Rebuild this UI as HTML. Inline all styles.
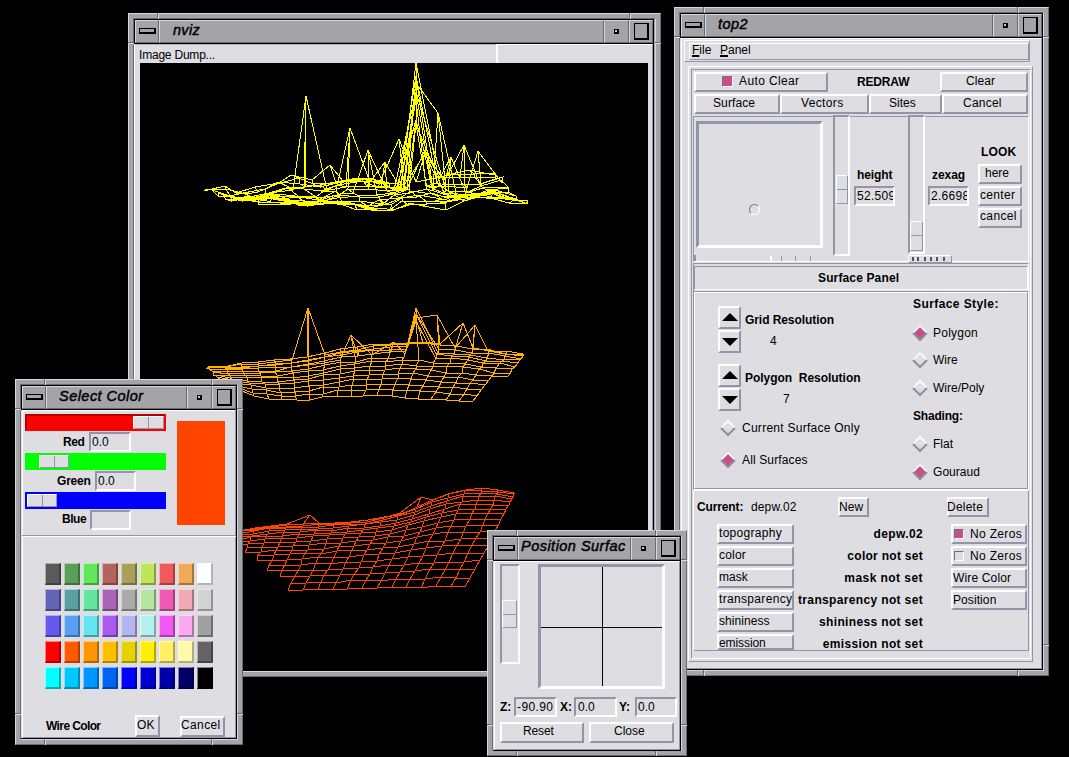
<!DOCTYPE html>
<html><head><meta charset="utf-8"><style>
html,body{margin:0;padding:0;background:#000;width:1069px;height:757px;overflow:hidden;position:relative}
div{position:absolute;box-sizing:border-box}
.t{white-space:nowrap;font-family:"Liberation Sans",sans-serif;line-height:normal;height:auto;color:#000}
svg{position:absolute;left:0;top:0}
</style></head><body>
<div style="left:128px;top:13px;width:533px;height:664px;background:#a4a4a8"></div>
<div style="left:128px;top:13px;width:533px;height:664px;border-style:solid;border-width:1px;border-color:#d6d6e2 #6a6a70 #6a6a70 #d6d6e2;"></div>
<div style="left:133px;top:18px;width:523px;height:654px;border-style:solid;border-width:1px;border-color:#6a6a70 #d6d6e2 #d6d6e2 #6a6a70;"></div>
<div style="left:158px;top:13px;width:1px;height:6px;background:#d6d6e2"></div>
<div style="left:630px;top:13px;width:1px;height:6px;background:#d6d6e2"></div>
<div style="left:158px;top:671px;width:1px;height:6px;background:#d6d6e2"></div>
<div style="left:630px;top:671px;width:1px;height:6px;background:#d6d6e2"></div>
<div style="left:128px;top:43px;width:6px;height:1px;background:#d6d6e2"></div>
<div style="left:655px;top:43px;width:6px;height:1px;background:#d6d6e2"></div>
<div style="left:128px;top:646px;width:6px;height:1px;background:#d6d6e2"></div>
<div style="left:655px;top:646px;width:6px;height:1px;background:#d6d6e2"></div>
<div style="left:157px;top:13px;width:1px;height:6px;background:#6a6a70"></div>
<div style="left:629px;top:13px;width:1px;height:6px;background:#6a6a70"></div>
<div style="left:157px;top:671px;width:1px;height:6px;background:#6a6a70"></div>
<div style="left:629px;top:671px;width:1px;height:6px;background:#6a6a70"></div>
<div style="left:128px;top:42px;width:6px;height:1px;background:#6a6a70"></div>
<div style="left:655px;top:42px;width:6px;height:1px;background:#6a6a70"></div>
<div style="left:128px;top:645px;width:6px;height:1px;background:#6a6a70"></div>
<div style="left:655px;top:645px;width:6px;height:1px;background:#6a6a70"></div>
<div style="left:134px;top:19px;width:520px;height:25px;border:1px solid #000;background:#a4a4a8"></div>
<div style="left:135px;top:20px;width:24px;height:23px;border-style:solid;border-width:1px;border-color:#d6d6e2 #6a6a70 #6a6a70 #d6d6e2;"></div>
<div style="left:159px;top:20px;width:445px;height:23px;border-style:solid;border-width:1px;border-color:#d6d6e2 #6a6a70 #6a6a70 #d6d6e2;"></div>
<div style="left:604px;top:20px;width:25px;height:23px;border-style:solid;border-width:1px;border-color:#d6d6e2 #6a6a70 #6a6a70 #d6d6e2;"></div>
<div style="left:629px;top:20px;width:24px;height:23px;border-style:solid;border-width:1px;border-color:#d6d6e2 #6a6a70 #6a6a70 #d6d6e2;"></div>
<div style="left:139px;top:28px;width:17px;height:6px;border:solid #000;border-width:1px 2px 2px 1px"></div>
<div style="left:614px;top:29px;width:5px;height:5px;border:solid #000;border-width:1px 2px 2px 1px;background:#c8c8d0"></div>
<div style="left:634px;top:23px;width:15px;height:17px;border:solid #000;border-width:1px 2px 2px 1px"></div>
<div class="t" style="left:173px;top:22px;font-size:14.5px;font-weight:normal;font-style:italic;color:#000;letter-spacing:0.301px;-webkit-text-stroke:0.45px #000">nviz</div>
<div style="left:134px;top:44px;width:519px;height:627px;background:#dedee2"></div>
<div style="left:134px;top:44px;width:519px;height:627px;border-style:solid;border-width:1px;border-color:#ffffff #9494a8 #9494a8 #ffffff;"></div>
<div style="left:653px;top:44px;width:1px;height:627px;background:#000"></div>
<div style="left:135px;top:44px;width:361px;height:1px;background:#b4b4bc"></div>
<div style="left:496px;top:44px;width:2px;height:19px;background:#ffffff"></div>
<div class="t" style="left:139px;top:48px;font-size:12px;font-weight:normal;font-style:normal;color:#000;letter-spacing:-0.208px;">Image Dump...</div>
<div style="left:140px;top:63px;width:508px;height:608px;background:#000"></div>
<svg width="1069" height="757" style="left:0;top:0"><defs><clipPath id="cv"><rect x="140" y="63" width="508" height="609"/></clipPath></defs><g clip-path="url(#cv)" fill="none" stroke-width="1" shape-rendering="crispEdges"><path d="M258,204 282,204 291,204 309,203 330,203 343,205 357,210 379,208 394,210 410,203 423,206 446,210 464,201 478,197 494,199 509,203 526,203 M259,202 280,203 293,203 306,202 327,201 338,204 355,205 375,210 393,210 409,205 427,204 445,203 457,198 480,197 495,198 514,200 528,201 M258,198 270,202 288,203 308,205 323,203 343,201 352,204 374,211 390,210 402,201 426,201 435,201 452,201 476,193 491,197 511,197 527,204 M256,200 273,197 291,202 301,206 323,204 336,203 354,204 365,206 392,204 402,198 418,195 442,199 452,201 471,198 493,193 509,199 517,200 M251,200 271,198 287,200 299,204 318,201 337,201 351,203 370,208 387,204 403,197 417,197 432,193 447,198 474,197 490,192 498,196 516,200 M251,199 263,197 278,200 298,200 318,203 327,203 349,203 368,206 379,200 400,198 411,191 432,194 446,197 470,195 486,195 496,193 521,201 M243,201 261,197 277,195 290,200 308,206 327,203 342,202 359,201 383,204 394,195 410,193 427,189 450,196 465,198 479,195 496,192 517,200 M244,199 254,199 270,197 293,203 311,202 327,200 339,195 359,197 379,197 398,193 409,189 416,124 444,193 458,194 475,195 495,190 516,196 M233,198 254,198 270,194 284,201 308,205 318,202 337,198 359,196 377,195 393,193 404,189 416,92 446,190 461,197 481,193 495,192 508,192 M231,197 251,199 271,197 285,200 306,203 317,201 340,194 353,193 368,150 387,191 403,190 416,83 438,113 457,197 477,195 488,190 508,188 M231,201 249,198 269,195 280,199 298,197 319,198 339,195 348,189 368,189 387,191 407,188 416,77 433,189 452,196 474,194 490,192 504,187 M225,199 240,200 262,196 276,194 295,196 318,200 336,191 350,128 370,182 385,162 401,189 416,63 440,185 448,191 469,192 483,188 508,187 M226,199 246,200 257,202 277,196 298,196 316,197 324,191 346,187 367,186 381,186 398,189 416,76 437,183 451,157 466,193 481,186 501,180 M222,194 238,200 253,201 273,193 288,188 304,189 321,191 338,185 363,181 377,187 400,187 416,100 426,186 444,186 467,188 478,151 502,183 M218,193 234,198 254,196 269,193 293,190 306,96 327,190 344,182 361,179 381,183 394,190 416,92 432,188 445,184 464,184 481,184 503,177 M218,196 235,197 254,198 266,194 289,187 305,187 320,185 341,181 358,178 374,179 396,190 416,120 425,155 445,180 464,145 480,184 495,179 M212,190 230,196 243,193 265,189 278,182 300,184 320,187 337,183 352,180 372,179 390,187 407,189 425,150 441,177 460,177 475,177 495,177 M206,189 226,189 246,194 258,192 277,184 299,178 313,184 336,183 352,181 371,179 389,183 404,185 425,154 436,177 459,174 474,174 495,173 M204,191 225,186 236,193 255,187 279,183 291,175 312,180 330,165 343,181 370,181 379,184 399,139 416,182 437,178 451,174 469,170 494,175 M258,204 259,202 258,198 256,200 251,200 251,199 243,201 244,199 233,198 231,197 231,201 225,199 226,199 222,194 218,193 218,196 212,190 206,189 204,191 M282,204 280,203 270,202 273,197 271,198 263,197 261,197 254,199 254,198 251,199 249,198 240,200 246,200 238,200 234,198 235,197 230,196 226,189 225,186 M291,204 293,203 288,203 291,202 287,200 278,200 277,195 270,197 270,194 271,197 269,195 262,196 257,202 253,201 254,196 254,198 243,193 246,194 236,193 M309,203 306,202 308,205 301,206 299,204 298,200 290,200 293,203 284,201 285,200 280,199 276,194 277,196 273,193 269,193 266,194 265,189 258,192 255,187 M330,203 327,201 323,203 323,204 318,201 318,203 308,206 311,202 308,205 306,203 298,197 295,196 298,196 288,188 293,190 289,187 278,182 277,184 279,183 M343,205 338,204 343,201 336,203 337,201 327,203 327,203 327,200 318,202 317,201 319,198 318,200 316,197 304,189 306,96 305,187 300,184 299,178 291,175 M357,210 355,205 352,204 354,204 351,203 349,203 342,202 339,195 337,198 340,194 339,195 336,191 324,191 321,191 327,190 320,185 320,187 313,184 312,180 M379,208 375,210 374,211 365,206 370,208 368,206 359,201 359,197 359,196 353,193 348,189 350,128 346,187 338,185 344,182 341,181 337,183 336,183 330,165 M394,210 393,210 390,210 392,204 387,204 379,200 383,204 379,197 377,195 368,150 368,189 370,182 367,186 363,181 361,179 358,178 352,180 352,181 343,181 M410,203 409,205 402,201 402,198 403,197 400,198 394,195 398,193 393,193 387,191 387,191 385,162 381,186 377,187 381,183 374,179 372,179 371,179 370,181 M423,206 427,204 426,201 418,195 417,197 411,191 410,193 409,189 404,189 403,190 407,188 401,189 398,189 400,187 394,190 396,190 390,187 389,183 379,184 M446,210 445,203 435,201 442,199 432,193 432,194 427,189 416,124 416,92 416,83 416,77 416,63 416,76 416,100 416,92 416,120 407,189 404,185 399,139 M464,201 457,198 452,201 452,201 447,198 446,197 450,196 444,193 446,190 438,113 433,189 440,185 437,183 426,186 432,188 425,155 425,150 425,154 416,182 M478,197 480,197 476,193 471,198 474,197 470,195 465,198 458,194 461,197 457,197 452,196 448,191 451,157 444,186 445,184 445,180 441,177 436,177 437,178 M494,199 495,198 491,197 493,193 490,192 486,195 479,195 475,195 481,193 477,195 474,194 469,192 466,193 467,188 464,184 464,145 460,177 459,174 451,174 M509,203 514,200 511,197 509,199 498,196 496,193 496,192 495,190 495,192 488,190 490,192 483,188 481,186 478,151 481,184 480,184 475,177 474,174 469,170 M526,203 528,201 527,204 517,200 516,200 521,201 517,200 516,196 508,192 508,188 504,187 508,187 501,180 502,183 503,177 495,179 495,177 495,173 494,175" stroke="#ffff00" /><path d="M228,387 242,391 254,396 269,399 282,399 297,400 310,400 322,397 337,396 351,396 363,396 377,395 392,396 405,398 418,399 431,399 446,400 459,401 472,402 M225,385 239,388 253,393 267,394 281,396 295,396 309,394 323,394 338,390 351,391 366,390 379,389 393,390 407,390 420,391 436,392 450,394 464,394 477,396 M223,385 238,386 252,389 266,390 281,393 295,392 309,391 323,387 339,387 352,385 366,385 381,384 395,384 409,385 423,386 439,387 453,387 467,389 481,390 M221,382 236,384 251,385 266,388 279,389 294,388 309,386 324,385 339,382 354,379 367,380 382,379 398,378 411,379 426,380 441,382 456,383 470,383 485,385 M220,379 233,382 249,383 265,384 279,384 294,383 308,381 323,380 339,378 353,376 369,375 383,374 398,374 413,373 428,376 444,377 458,377 473,380 489,380 M217,377 233,380 247,381 262,382 278,382 294,380 308,379 323,375 340,374 355,371 369,370 385,370 400,368 416,369 431,370 446,373 462,373 476,375 492,376 507,377 M216,375 230,378 247,377 261,378 277,377 293,378 308,376 324,373 340,369 354,368 370,366 385,366 402,364 416,366 433,367 447,366 463,367 479,369 494,373 510,374 M213,375 230,375 245,375 261,376 278,376 293,373 308,371 323,370 340,366 354,364 372,361 386,362 402,360 419,360 433,363 450,363 465,364 482,367 496,368 512,369 M213,372 228,374 244,373 260,373 275,372 292,371 308,369 325,365 341,362 356,362 371,358 388,359 404,357 416,321 436,359 451,358 468,360 483,363 500,363 515,367 M212,371 227,372 243,371 259,372 276,371 291,367 309,365 324,363 340,360 351,335 372,355 394,342 405,354 416,314 436,354 452,356 469,357 486,361 502,361 518,363 M210,370 227,369 242,369 258,368 275,367 291,367 309,364 324,361 341,357 358,356 372,354 390,352 406,351 416,308 438,353 454,354 470,355 487,358 504,360 520,359 M210,370 226,369 241,368 259,366 275,365 291,363 308,361 325,357 341,355 358,352 373,350 389,350 406,349 416,314 439,349 455,350 472,353 489,353 505,356 521,359 M209,368 225,367 242,367 259,366 275,364 291,363 308,360 324,357 340,353 358,351 374,349 390,347 408,346 416,318 437,315 455,348 475,325 488,351 505,354 523,356 M207,368 226,367 241,364 258,364 275,362 292,360 308,308 325,355 341,352 357,350 373,346 391,345 408,344 423,343 440,345 456,346 473,349 490,350 506,354 523,355 M209,366 224,367 242,363 258,362 274,360 290,359 307,357 325,353 340,349 357,347 374,344 390,344 408,343 423,342 440,344 463,323 473,348 490,351 506,351 523,354 M228,387 225,385 223,385 221,382 220,379 217,377 216,375 213,375 213,372 212,371 210,370 210,370 209,368 207,368 209,366 M242,391 239,388 238,386 236,384 233,382 233,380 230,378 230,375 228,374 227,372 227,369 226,369 225,367 226,367 224,367 M254,396 253,393 252,389 251,385 249,383 247,381 247,377 245,375 244,373 243,371 242,369 241,368 242,367 241,364 242,363 M269,399 267,394 266,390 266,388 265,384 262,382 261,378 261,376 260,373 259,372 258,368 259,366 259,366 258,364 258,362 M282,399 281,396 281,393 279,389 279,384 278,382 277,377 278,376 275,372 276,371 275,367 275,365 275,364 275,362 274,360 M297,400 295,396 295,392 294,388 294,383 294,380 293,378 293,373 292,371 291,367 291,367 291,363 291,363 292,360 290,359 M310,400 309,394 309,391 309,386 308,381 308,379 308,376 308,371 308,369 309,365 309,364 308,361 308,360 308,308 307,357 M322,397 323,394 323,387 324,385 323,380 323,375 324,373 323,370 325,365 324,363 324,361 325,357 324,357 325,355 325,353 M337,396 338,390 339,387 339,382 339,378 340,374 340,369 340,366 341,362 340,360 341,357 341,355 340,353 341,352 340,349 M351,396 351,391 352,385 354,379 353,376 355,371 354,368 354,364 356,362 351,335 358,356 358,352 358,351 357,350 357,347 M363,396 366,390 366,385 367,380 369,375 369,370 370,366 372,361 371,358 372,355 372,354 373,350 374,349 373,346 374,344 M377,395 379,389 381,384 382,379 383,374 385,370 385,366 386,362 388,359 394,342 390,352 389,350 390,347 391,345 390,344 M392,396 393,390 395,384 398,378 398,374 400,368 402,364 402,360 404,357 405,354 406,351 406,349 408,346 408,344 408,343 M405,398 407,390 409,385 411,379 413,373 416,369 416,366 419,360 416,321 416,314 416,308 416,314 416,318 423,343 423,342 M418,399 420,391 423,386 426,380 428,376 431,370 433,367 433,363 436,359 436,354 438,353 439,349 437,315 440,345 440,344 M431,399 436,392 439,387 441,382 444,377 446,373 447,366 450,363 451,358 452,356 454,354 455,350 455,348 456,346 463,323 M446,400 450,394 453,387 456,383 458,377 462,373 463,367 465,364 468,360 469,357 470,355 472,353 475,325 473,349 473,348 M459,401 464,394 467,389 470,383 473,380 476,375 479,369 482,367 483,363 486,361 487,358 489,353 488,351 490,350 490,351 M472,402 477,396 481,390 485,385 489,380 492,376 494,373 496,368 500,363 502,361 504,360 505,356 505,354 506,354 506,351 M507,377 510,374 512,369 515,367 518,363 520,359 521,359 523,356 523,355 523,354" stroke="#ffb000" /><path d="M288,590 303,590 318,589 333,589 347,589 362,588 377,588 392,587 406,587 421,588 436,586 451,586 465,587 M291,583 306,583 321,582 336,583 351,580 366,580 381,581 396,579 410,579 425,579 441,577 456,578 470,578 M280,576 295,576 310,576 324,575 340,575 354,574 370,574 385,573 400,572 415,571 430,569 445,570 460,569 475,569 M267,571 282,570 298,571 313,570 328,570 343,569 359,568 373,567 389,565 404,565 419,563 434,563 449,562 464,562 480,560 M269,565 285,565 301,565 316,563 331,564 346,562 361,562 377,561 392,559 408,557 423,556 437,555 453,553 468,553 484,553 M257,560 272,561 287,560 302,559 318,557 334,557 349,557 364,555 379,554 395,553 411,550 426,548 442,546 457,545 472,545 488,546 M258,555 274,555 290,554 305,553 321,554 337,551 352,550 367,550 383,548 398,547 414,544 429,541 445,541 461,539 476,538 492,538 M245,553 261,552 276,550 292,550 308,550 324,549 339,546 354,546 370,544 386,543 401,541 417,537 433,534 448,532 463,533 480,532 495,531 M247,548 262,547 278,547 293,546 309,545 326,543 341,543 356,541 373,540 388,537 404,536 420,532 436,528 451,526 466,526 483,525 498,526 M232,546 248,544 264,543 280,542 296,542 311,541 327,539 343,538 359,537 375,536 390,534 406,530 422,527 438,523 454,520 470,519 485,519 501,519 M233,543 250,541 265,539 282,538 297,538 313,536 329,535 345,534 361,533 376,532 392,530 408,525 424,521 441,517 456,514 472,513 488,513 504,514 M235,541 251,537 266,536 282,536 299,534 314,534 331,533 347,532 363,530 378,528 394,526 411,522 426,517 442,513 458,510 475,509 490,510 506,509 M236,536 252,536 268,534 284,532 300,532 316,530 332,531 348,528 364,528 380,526 396,523 412,519 429,514 445,509 460,504 476,504 493,505 509,505 M236,534 253,534 269,531 285,530 301,529 318,529 333,528 349,526 365,524 381,522 397,520 414,515 430,509 446,504 462,502 478,500 494,500 510,502 M221,535 238,534 254,531 269,528 286,528 302,527 318,527 334,525 350,524 366,524 383,520 398,516 415,512 431,506 447,501 463,496 479,496 495,496 512,499 M222,533 238,531 254,530 270,528 286,527 303,526 319,524 335,524 351,523 367,522 383,518 400,514 416,509 432,502 448,498 464,494 481,493 497,494 513,497 M223,532 238,531 255,529 271,527 287,525 303,524 320,523 335,523 351,522 368,520 384,517 401,515 417,507 433,500 448,494 465,490 481,491 497,492 514,494 M223,531 239,531 255,528 271,526 287,524 310,515 319,523 336,523 352,522 368,520 384,518 400,513 421,497 433,500 449,494 466,490 482,488 498,490 514,493 M221,535 222,533 223,532 223,531 M232,546 233,543 235,541 236,536 236,534 238,534 238,531 238,531 239,531 M245,553 247,548 248,544 250,541 251,537 252,536 253,534 254,531 254,530 255,529 255,528 M257,560 258,555 261,552 262,547 264,543 265,539 266,536 268,534 269,531 269,528 270,528 271,527 271,526 M267,571 269,565 272,561 274,555 276,550 278,547 280,542 282,538 282,536 284,532 285,530 286,528 286,527 287,525 287,524 M280,576 282,570 285,565 287,560 290,554 292,550 293,546 296,542 297,538 299,534 300,532 301,529 302,527 303,526 303,524 310,515 M288,590 291,583 295,576 298,571 301,565 302,559 305,553 308,550 309,545 311,541 313,536 314,534 316,530 318,529 318,527 319,524 320,523 319,523 M303,590 306,583 310,576 313,570 316,563 318,557 321,554 324,549 326,543 327,539 329,535 331,533 332,531 333,528 334,525 335,524 335,523 336,523 M318,589 321,582 324,575 328,570 331,564 334,557 337,551 339,546 341,543 343,538 345,534 347,532 348,528 349,526 350,524 351,523 351,522 352,522 M333,589 336,583 340,575 343,569 346,562 349,557 352,550 354,546 356,541 359,537 361,533 363,530 364,528 365,524 366,524 367,522 368,520 368,520 M347,589 351,580 354,574 359,568 361,562 364,555 367,550 370,544 373,540 375,536 376,532 378,528 380,526 381,522 383,520 383,518 384,517 384,518 M362,588 366,580 370,574 373,567 377,561 379,554 383,548 386,543 388,537 390,534 392,530 394,526 396,523 397,520 398,516 400,514 401,515 400,513 M377,588 381,581 385,573 389,565 392,559 395,553 398,547 401,541 404,536 406,530 408,525 411,522 412,519 414,515 415,512 416,509 417,507 421,497 M392,587 396,579 400,572 404,565 408,557 411,550 414,544 417,537 420,532 422,527 424,521 426,517 429,514 430,509 431,506 432,502 433,500 433,500 M406,587 410,579 415,571 419,563 423,556 426,548 429,541 433,534 436,528 438,523 441,517 442,513 445,509 446,504 447,501 448,498 448,494 449,494 M421,588 425,579 430,569 434,563 437,555 442,546 445,541 448,532 451,526 454,520 456,514 458,510 460,504 462,502 463,496 464,494 465,490 466,490 M436,586 441,577 445,570 449,562 453,553 457,545 461,539 463,533 466,526 470,519 472,513 475,509 476,504 478,500 479,496 481,493 481,491 482,488 M451,586 456,578 460,569 464,562 468,553 472,545 476,538 480,532 483,525 485,519 488,513 490,510 493,505 494,500 495,496 497,494 497,492 498,490 M465,587 470,578 475,569 480,560 484,553 488,546 492,538 495,531 498,526 501,519 504,514 506,509 509,505 510,502 512,499 513,497 514,494 514,493" stroke="#ff4400" /></g></svg>
<div style="left:674px;top:7px;width:375px;height:669px;background:#a4a4a8"></div>
<div style="left:674px;top:7px;width:375px;height:669px;border-style:solid;border-width:1px;border-color:#d6d6e2 #6a6a70 #6a6a70 #d6d6e2;"></div>
<div style="left:679px;top:12px;width:365px;height:659px;border-style:solid;border-width:1px;border-color:#6a6a70 #d6d6e2 #d6d6e2 #6a6a70;"></div>
<div style="left:704px;top:7px;width:1px;height:6px;background:#d6d6e2"></div>
<div style="left:1018px;top:7px;width:1px;height:6px;background:#d6d6e2"></div>
<div style="left:704px;top:670px;width:1px;height:6px;background:#d6d6e2"></div>
<div style="left:1018px;top:670px;width:1px;height:6px;background:#d6d6e2"></div>
<div style="left:674px;top:37px;width:6px;height:1px;background:#d6d6e2"></div>
<div style="left:1043px;top:37px;width:6px;height:1px;background:#d6d6e2"></div>
<div style="left:674px;top:645px;width:6px;height:1px;background:#d6d6e2"></div>
<div style="left:1043px;top:645px;width:6px;height:1px;background:#d6d6e2"></div>
<div style="left:703px;top:7px;width:1px;height:6px;background:#6a6a70"></div>
<div style="left:1017px;top:7px;width:1px;height:6px;background:#6a6a70"></div>
<div style="left:703px;top:670px;width:1px;height:6px;background:#6a6a70"></div>
<div style="left:1017px;top:670px;width:1px;height:6px;background:#6a6a70"></div>
<div style="left:674px;top:36px;width:6px;height:1px;background:#6a6a70"></div>
<div style="left:1043px;top:36px;width:6px;height:1px;background:#6a6a70"></div>
<div style="left:674px;top:644px;width:6px;height:1px;background:#6a6a70"></div>
<div style="left:1043px;top:644px;width:6px;height:1px;background:#6a6a70"></div>
<div style="left:680px;top:13px;width:363px;height:25px;border:1px solid #000;background:#a4a4a8"></div>
<div style="left:681px;top:14px;width:24px;height:23px;border-style:solid;border-width:1px;border-color:#d6d6e2 #6a6a70 #6a6a70 #d6d6e2;"></div>
<div style="left:705px;top:14px;width:288px;height:23px;border-style:solid;border-width:1px;border-color:#d6d6e2 #6a6a70 #6a6a70 #d6d6e2;"></div>
<div style="left:993px;top:14px;width:25px;height:23px;border-style:solid;border-width:1px;border-color:#d6d6e2 #6a6a70 #6a6a70 #d6d6e2;"></div>
<div style="left:1018px;top:14px;width:24px;height:23px;border-style:solid;border-width:1px;border-color:#d6d6e2 #6a6a70 #6a6a70 #d6d6e2;"></div>
<div style="left:685px;top:22px;width:17px;height:6px;border:solid #000;border-width:1px 2px 2px 1px"></div>
<div style="left:1003px;top:23px;width:5px;height:5px;border:solid #000;border-width:1px 2px 2px 1px;background:#c8c8d0"></div>
<div style="left:1023px;top:17px;width:15px;height:17px;border:solid #000;border-width:1px 2px 2px 1px"></div>
<div class="t" style="left:718px;top:16px;font-size:14.5px;font-weight:normal;font-style:italic;color:#000;letter-spacing:0.441px;-webkit-text-stroke:0.45px #000">top2</div>
<div style="left:680px;top:38px;width:363px;height:632px;background:#dedee2"></div>
<div style="left:681px;top:38px;width:361px;height:631px;border-style:solid;border-width:1px;border-color:#ffffff #9494a8 #9494a8 #ffffff;"></div>
<div style="left:1042px;top:38px;width:1px;height:632px;background:#000"></div>
<div style="left:680px;top:669px;width:363px;height:1px;background:#000"></div>
<div style="left:684px;top:40px;width:346px;height:22px;border-style:solid;border-width:1px;border-color:#ffffff #9494a8 #9494a8 #ffffff;"></div>
<div style="left:689px;top:43px;width:340px;height:17px;border-style:solid;border-width:1px;border-color:#ffffff #9494a8 #9494a8 #ffffff;"></div>
<div class="t" style="left:692px;top:43px;font-size:12px;font-weight:normal;font-style:normal;color:#000;"><u style="text-decoration-thickness:2px;text-underline-offset:1px">F</u>ile</div>
<div class="t" style="left:720px;top:43px;font-size:12px;font-weight:normal;font-style:normal;color:#000;"><u style="text-decoration-thickness:2px;text-underline-offset:1px">P</u>anel</div>
<div style="left:688px;top:66px;width:345px;height:596px;border-style:solid;border-width:1px;border-color:#ffffff #9494a8 #9494a8 #ffffff;"></div>
<div style="left:691px;top:69px;width:340px;height:590px;border-style:solid;border-width:1px;border-color:#9494a8 #ffffff #ffffff #9494a8;"></div>
<div style="left:694px;top:72px;width:134px;height:20px;border-style:solid;border-width:2px;border-color:#ffffff #9494a8 #9494a8 #ffffff;background:#dedee2;"></div>
<div style="left:722px;top:76px;width:11px;height:11px;background:#c8508a;border-style:solid;border-width:1px;border-color:#707080 #fff #fff #707080"></div>
<div class="t" style="left:739px;top:74px;font-size:12px;font-weight:normal;font-style:normal;color:#000;letter-spacing:0.380px;">Auto Clear</div>
<div class="t" style="left:857px;top:75px;font-size:12px;font-weight:bold;font-style:normal;color:#000;letter-spacing:-0.157px;">REDRAW</div>
<div style="left:940px;top:72px;width:88px;height:20px;border-style:solid;border-width:2px;border-color:#ffffff #9494a8 #9494a8 #ffffff;background:#dedee2;"></div>
<div class="t" style="left:966px;top:74px;font-size:12px;font-weight:normal;font-style:normal;color:#000;letter-spacing:0.062px;">Clear</div>
<div style="left:694px;top:94px;width:86px;height:20px;border-style:solid;border-width:2px;border-color:#ffffff #9494a8 #9494a8 #ffffff;background:#dedee2;"></div>
<div class="t" style="left:713px;top:96px;font-size:12px;font-weight:normal;font-style:normal;color:#000;letter-spacing:0.106px;">Surface</div>
<div style="left:780px;top:94px;width:89px;height:20px;border-style:solid;border-width:2px;border-color:#ffffff #9494a8 #9494a8 #ffffff;background:#dedee2;"></div>
<div class="t" style="left:801px;top:96px;font-size:12px;font-weight:normal;font-style:normal;color:#000;letter-spacing:0.353px;">Vectors</div>
<div style="left:869px;top:94px;width:73px;height:20px;border-style:solid;border-width:2px;border-color:#ffffff #9494a8 #9494a8 #ffffff;background:#dedee2;"></div>
<div class="t" style="left:889px;top:96px;font-size:12px;font-weight:normal;font-style:normal;color:#000;letter-spacing:0.023px;">Sites</div>
<div style="left:942px;top:94px;width:86px;height:20px;border-style:solid;border-width:2px;border-color:#ffffff #9494a8 #9494a8 #ffffff;background:#dedee2;"></div>
<div class="t" style="left:963px;top:96px;font-size:12px;font-weight:normal;font-style:normal;color:#000;letter-spacing:0.223px;">Cancel</div>
<div style="left:693px;top:116px;width:336px;height:146px;border-style:solid;border-width:1px;border-color:#9494a8 #ffffff #ffffff #9494a8;"></div>
<div style="left:696px;top:121px;width:127px;height:127px;border-style:solid;border-width:3px;border-color:#9494a8 #ffffff #ffffff #9494a8;background:#dedee2;"></div>
<div style="left:749px;top:204px;width:11px;height:11px;border-radius:50%;border:1px solid;border-color:#777 #fff #fff #777"></div>
<div style="left:833px;top:115px;width:17px;height:141px;border-style:solid;border-width:2px;border-color:#9494a8 #ffffff #ffffff #9494a8;background:#dedee2;"></div>
<div style="left:836px;top:175px;width:12px;height:29px;border-style:solid;border-width:1px;border-color:#ffffff #9494a8 #9494a8 #ffffff;background:#dedee2;"></div>
<div style="left:837px;top:189px;width:10px;height:1px;background:#9494a8"></div>
<div class="t" style="left:857px;top:168px;font-size:12px;font-weight:bold;font-style:normal;color:#000;letter-spacing:-0.083px;">height</div>
<div style="left:854px;top:186px;width:41px;height:20px;border-style:solid;border-width:2px;border-color:#9494a8 #ffffff #ffffff #9494a8;background:#dedee2;"></div>
<div class="t" style="left:857px;top:189px;font-size:12px;font-weight:normal;font-style:normal;color:#000;width:36px;overflow:hidden;letter-spacing:0.3px">52.509</div>
<div style="left:908px;top:115px;width:17px;height:139px;border-style:solid;border-width:2px;border-color:#9494a8 #ffffff #ffffff #9494a8;background:#dedee2;"></div>
<div style="left:910px;top:221px;width:13px;height:30px;border-style:solid;border-width:1px;border-color:#ffffff #9494a8 #9494a8 #ffffff;background:#dedee2;"></div>
<div style="left:911px;top:235px;width:11px;height:1px;background:#9494a8"></div>
<div class="t" style="left:932px;top:168px;font-size:12px;font-weight:bold;font-style:normal;color:#000;letter-spacing:-0.072px;">zexag</div>
<div style="left:928px;top:186px;width:41px;height:20px;border-style:solid;border-width:2px;border-color:#9494a8 #ffffff #ffffff #9494a8;background:#dedee2;"></div>
<div class="t" style="left:931px;top:189px;font-size:12px;font-weight:normal;font-style:normal;color:#000;width:36px;overflow:hidden;letter-spacing:0.3px">2.6698</div>
<div class="t" style="left:981px;top:145px;font-size:12px;font-weight:bold;font-style:normal;color:#000;letter-spacing:0.182px;">LOOK</div>
<div style="left:978px;top:164px;width:44px;height:20px;border-style:solid;border-width:2px;border-color:#ffffff #9494a8 #9494a8 #ffffff;background:#dedee2;"></div>
<div class="t" style="left:985px;top:166px;font-size:12px;font-weight:normal;font-style:normal;color:#000;letter-spacing:-0.008px;">here</div>
<div style="left:978px;top:186px;width:44px;height:20px;border-style:solid;border-width:2px;border-color:#ffffff #9494a8 #9494a8 #ffffff;background:#dedee2;"></div>
<div class="t" style="left:980px;top:188px;font-size:12px;font-weight:normal;font-style:normal;color:#000;letter-spacing:0.323px;">center</div>
<div style="left:978px;top:208px;width:44px;height:20px;border-style:solid;border-width:2px;border-color:#ffffff #9494a8 #9494a8 #ffffff;background:#dedee2;"></div>
<div class="t" style="left:980px;top:209px;font-size:12px;font-weight:normal;font-style:normal;color:#000;letter-spacing:0.352px;">cancel</div>
<div style="left:693px;top:263px;width:336px;height:29px;border-style:solid;border-width:1px;border-color:#9494a8 #ffffff #ffffff #9494a8;"></div>
<div style="left:694px;top:266px;width:334px;height:24px;border-style:solid;border-width:1px;border-color:#9494a8 #ffffff #ffffff #9494a8;"></div>
<div class="t" style="left:818px;top:271px;font-size:12px;font-weight:bold;font-style:normal;color:#000;letter-spacing:0.140px;">Surface Panel</div>
<div style="left:694px;top:255px;width:2px;height:6px;background:#9494a8"></div>
<div style="left:781px;top:256px;width:1px;height:5px;background:#9494a8"></div>
<div style="left:795px;top:256px;width:1px;height:5px;background:#9494a8"></div>
<div style="left:810px;top:256px;width:1px;height:5px;background:#9494a8"></div>
<div style="left:770px;top:256px;width:2px;height:5px;background:#ffffff"></div>
<div style="left:908px;top:255px;width:44px;height:8px;border-style:solid;border-width:1px;border-color:#ffffff #9494a8 #9494a8 #ffffff;background:#dedee2;"></div>
<div style="left:912px;top:257px;width:2px;height:4px;background:#555"></div>
<div style="left:917px;top:257px;width:2px;height:4px;background:#555"></div>
<div style="left:924px;top:257px;width:2px;height:4px;background:#555"></div>
<div style="left:930px;top:257px;width:2px;height:4px;background:#555"></div>
<div style="left:936px;top:257px;width:2px;height:4px;background:#555"></div>
<div style="left:943px;top:257px;width:2px;height:4px;background:#555"></div>
<div style="left:693px;top:291px;width:336px;height:199px;border-style:solid;border-width:1px;border-color:#9494a8 #ffffff #ffffff #9494a8;"></div>
<div style="left:694px;top:292px;width:334px;height:197px;border-style:solid;border-width:1px;border-color:#ffffff #9494a8 #9494a8 #ffffff;"></div>
<div style="left:718px;top:306px;width:23px;height:23px;border-style:solid;border-width:2px;border-color:#ffffff #9494a8 #9494a8 #ffffff;background:#dedee2;"></div>
<div style="left:718px;top:330px;width:23px;height:23px;border-style:solid;border-width:2px;border-color:#ffffff #9494a8 #9494a8 #ffffff;background:#dedee2;"></div>
<div style="left:722px;top:313px;width:0;height:0;border-left:8px solid transparent;border-right:8px solid transparent;border-bottom:8px solid #000"></div>
<div style="left:722px;top:338px;width:0;height:0;border-left:8px solid transparent;border-right:8px solid transparent;border-top:8px solid #000"></div>
<div class="t" style="left:745px;top:313px;font-size:12px;font-weight:bold;font-style:normal;color:#000;letter-spacing:-0.067px;">Grid Resolution</div>
<div class="t" style="left:770px;top:334px;font-size:12px;font-weight:normal;font-style:normal;color:#000;">4</div>
<div style="left:718px;top:364px;width:23px;height:23px;border-style:solid;border-width:2px;border-color:#ffffff #9494a8 #9494a8 #ffffff;background:#dedee2;"></div>
<div style="left:718px;top:388px;width:23px;height:23px;border-style:solid;border-width:2px;border-color:#ffffff #9494a8 #9494a8 #ffffff;background:#dedee2;"></div>
<div style="left:722px;top:371px;width:0;height:0;border-left:8px solid transparent;border-right:8px solid transparent;border-bottom:8px solid #000"></div>
<div style="left:722px;top:396px;width:0;height:0;border-left:8px solid transparent;border-right:8px solid transparent;border-top:8px solid #000"></div>
<div class="t" style="left:745px;top:371px;font-size:12px;font-weight:bold;font-style:normal;color:#000;letter-spacing:-0.026px;">Polygon&nbsp; Resolution</div>
<div class="t" style="left:783px;top:392px;font-size:12px;font-weight:normal;font-style:normal;color:#000;">7</div>
<svg style="left:720px;top:420px" width="17" height="17"><polygon points="8,1 15,8 8,15 1,8" fill="#dedee2" /><polyline points="1,8 8,1 15,8" fill="none" stroke="#fff" stroke-width="1.5"/><polyline points="1,8 8,15 15,8" fill="none" stroke="#8e8e98" stroke-width="2"/></svg>
<div class="t" style="left:742px;top:421px;font-size:12px;font-weight:normal;font-style:normal;color:#000;letter-spacing:0.264px;">Current Surface Only</div>
<svg style="left:720px;top:452px" width="17" height="17"><polygon points="8,1 15,8 8,15 1,8" fill="#c8508a" /><polyline points="1,8 8,1 15,8" fill="none" stroke="#fff" stroke-width="1.5"/><polyline points="1,8 8,15 15,8" fill="none" stroke="#8e8e98" stroke-width="2"/></svg>
<div class="t" style="left:742px;top:453px;font-size:12px;font-weight:normal;font-style:normal;color:#000;letter-spacing:0.139px;">All Surfaces</div>
<div class="t" style="left:913px;top:297px;font-size:12px;font-weight:bold;font-style:normal;color:#000;letter-spacing:0.411px;">Surface Style:</div>
<svg style="left:912px;top:325px" width="17" height="17"><polygon points="8,1 15,8 8,15 1,8" fill="#c8508a" /><polyline points="1,8 8,1 15,8" fill="none" stroke="#fff" stroke-width="1.5"/><polyline points="1,8 8,15 15,8" fill="none" stroke="#8e8e98" stroke-width="2"/></svg>
<div class="t" style="left:933px;top:326px;font-size:12px;font-weight:normal;font-style:normal;color:#000;letter-spacing:0.232px;">Polygon</div>
<svg style="left:912px;top:352px" width="17" height="17"><polygon points="8,1 15,8 8,15 1,8" fill="#dedee2" /><polyline points="1,8 8,1 15,8" fill="none" stroke="#fff" stroke-width="1.5"/><polyline points="1,8 8,15 15,8" fill="none" stroke="#8e8e98" stroke-width="2"/></svg>
<div class="t" style="left:933px;top:353px;font-size:12px;font-weight:normal;font-style:normal;color:#000;">Wire</div>
<svg style="left:912px;top:380px" width="17" height="17"><polygon points="8,1 15,8 8,15 1,8" fill="#dedee2" /><polyline points="1,8 8,1 15,8" fill="none" stroke="#fff" stroke-width="1.5"/><polyline points="1,8 8,15 15,8" fill="none" stroke="#8e8e98" stroke-width="2"/></svg>
<div class="t" style="left:933px;top:381px;font-size:12px;font-weight:normal;font-style:normal;color:#000;">Wire/Poly</div>
<div class="t" style="left:913px;top:409px;font-size:12px;font-weight:bold;font-style:normal;color:#000;letter-spacing:-0.204px;">Shading:</div>
<svg style="left:912px;top:436px" width="17" height="17"><polygon points="8,1 15,8 8,15 1,8" fill="#dedee2" /><polyline points="1,8 8,1 15,8" fill="none" stroke="#fff" stroke-width="1.5"/><polyline points="1,8 8,15 15,8" fill="none" stroke="#8e8e98" stroke-width="2"/></svg>
<div class="t" style="left:933px;top:437px;font-size:12px;font-weight:normal;font-style:normal;color:#000;">Flat</div>
<svg style="left:912px;top:464px" width="17" height="17"><polygon points="8,1 15,8 8,15 1,8" fill="#c8508a" /><polyline points="1,8 8,1 15,8" fill="none" stroke="#fff" stroke-width="1.5"/><polyline points="1,8 8,15 15,8" fill="none" stroke="#8e8e98" stroke-width="2"/></svg>
<div class="t" style="left:933px;top:465px;font-size:12px;font-weight:normal;font-style:normal;color:#000;letter-spacing:0.042px;">Gouraud</div>
<div style="left:693px;top:490px;width:336px;height:161px;border-style:solid;border-width:1px;border-color:#ffffff #9494a8 #9494a8 #ffffff;"></div>
<div class="t" style="left:697px;top:500px;font-size:12px;font-weight:bold;font-style:normal;color:#000;letter-spacing:-0.130px;">Current:</div>
<div class="t" style="left:751px;top:500px;font-size:12px;font-weight:normal;font-style:normal;color:#000;letter-spacing:0.126px;">depw.02</div>
<div style="left:838px;top:497px;width:31px;height:20px;border-style:solid;border-width:2px;border-color:#ffffff #9494a8 #9494a8 #ffffff;background:#dedee2;"></div>
<div class="t" style="left:839px;top:500px;font-size:12px;font-weight:normal;font-style:normal;color:#000;letter-spacing:0.095px;">New</div>
<div style="left:947px;top:497px;width:42px;height:20px;border-style:solid;border-width:2px;border-color:#ffffff #9494a8 #9494a8 #ffffff;background:#dedee2;"></div>
<div class="t" style="left:947px;top:500px;font-size:12px;font-weight:normal;font-style:normal;color:#000;letter-spacing:0.235px;">Delete</div>
<div style="left:717px;top:524px;width:77px;height:20px;border-style:solid;border-width:2px;border-color:#ffffff #9494a8 #9494a8 #ffffff;background:#dedee2;"></div>
<div class="t" style="left:719px;top:526px;font-size:12px;font-weight:normal;font-style:normal;color:#000;letter-spacing:0.305px;">topography</div>
<div class="t" style="left:523px;width:400px;text-align:right;top:527px;font-size:12px;font-weight:bold;letter-spacing:0.371px;">depw.02</div>
<div style="left:717px;top:546px;width:77px;height:20px;border-style:solid;border-width:2px;border-color:#ffffff #9494a8 #9494a8 #ffffff;background:#dedee2;"></div>
<div class="t" style="left:719px;top:548px;font-size:12px;font-weight:normal;font-style:normal;color:#000;letter-spacing:0.197px;">color</div>
<div class="t" style="left:523px;width:400px;text-align:right;top:549px;font-size:12px;font-weight:bold;letter-spacing:0.283px;">color not set</div>
<div style="left:717px;top:568px;width:77px;height:20px;border-style:solid;border-width:2px;border-color:#ffffff #9494a8 #9494a8 #ffffff;background:#dedee2;"></div>
<div class="t" style="left:719px;top:570px;font-size:12px;font-weight:normal;font-style:normal;color:#000;">mask</div>
<div class="t" style="left:523px;width:400px;text-align:right;top:571px;font-size:12px;font-weight:bold;letter-spacing:0.445px;">mask not set</div>
<div style="left:717px;top:590px;width:77px;height:20px;border-style:solid;border-width:2px;border-color:#ffffff #9494a8 #9494a8 #ffffff;background:#dedee2;"></div>
<div class="t" style="left:719px;top:592px;font-size:12px;font-weight:normal;font-style:normal;color:#000;letter-spacing:0.327px;">transparency</div>
<div class="t" style="left:523px;width:400px;text-align:right;top:593px;font-size:12px;font-weight:bold;letter-spacing:0.348px;">transparency not set</div>
<div style="left:717px;top:612px;width:77px;height:20px;border-style:solid;border-width:2px;border-color:#ffffff #9494a8 #9494a8 #ffffff;background:#dedee2;"></div>
<div class="t" style="left:719px;top:614px;font-size:12px;font-weight:normal;font-style:normal;color:#000;letter-spacing:0.063px;">shininess</div>
<div class="t" style="left:523px;width:400px;text-align:right;top:615px;font-size:12px;font-weight:bold;letter-spacing:0.35px">shininess not set</div>
<div style="left:717px;top:634px;width:77px;height:16px;border-style:solid;border-width:2px;border-color:#ffffff #9494a8 #9494a8 #ffffff;background:#dedee2;"></div>
<div class="t" style="left:719px;top:636px;font-size:12px;font-weight:normal;font-style:normal;color:#000;letter-spacing:-0.082px;">emission</div>
<div class="t" style="left:523px;width:400px;text-align:right;top:637px;font-size:12px;font-weight:bold;letter-spacing:0.35px">emission not set</div>
<div style="left:951px;top:524px;width:76px;height:20px;border-style:solid;border-width:2px;border-color:#ffffff #9494a8 #9494a8 #ffffff;background:#dedee2;"></div>
<div style="left:954px;top:529px;width:10px;height:10px;background:#c8508a;border-style:solid;border-width:1px;border-color:#707080 #fff #fff #707080"></div>
<div class="t" style="left:970px;top:527px;font-size:12px;font-weight:normal;font-style:normal;color:#000;letter-spacing:0.330px;">No Zeros</div>
<div style="left:951px;top:546px;width:76px;height:20px;border-style:solid;border-width:2px;border-color:#ffffff #9494a8 #9494a8 #ffffff;background:#dedee2;"></div>
<div style="left:954px;top:551px;width:10px;height:10px;border-style:solid;border-width:1px;border-color:#707080 #fff #fff #707080"></div>
<div class="t" style="left:970px;top:549px;font-size:12px;font-weight:normal;font-style:normal;color:#000;letter-spacing:0.330px;">No Zeros</div>
<div style="left:951px;top:568px;width:76px;height:20px;border-style:solid;border-width:2px;border-color:#ffffff #9494a8 #9494a8 #ffffff;background:#dedee2;"></div>
<div class="t" style="left:953px;top:571px;font-size:12px;font-weight:normal;font-style:normal;color:#000;letter-spacing:0.153px;">Wire Color</div>
<div style="left:951px;top:590px;width:76px;height:20px;border-style:solid;border-width:2px;border-color:#ffffff #9494a8 #9494a8 #ffffff;background:#dedee2;"></div>
<div class="t" style="left:953px;top:593px;font-size:12px;font-weight:normal;font-style:normal;color:#000;letter-spacing:0.087px;">Position</div>
<div style="left:15px;top:379px;width:228px;height:366px;background:#a4a4a8"></div>
<div style="left:15px;top:379px;width:228px;height:366px;border-style:solid;border-width:1px;border-color:#d6d6e2 #6a6a70 #6a6a70 #d6d6e2;"></div>
<div style="left:20px;top:384px;width:218px;height:356px;border-style:solid;border-width:1px;border-color:#6a6a70 #d6d6e2 #d6d6e2 #6a6a70;"></div>
<div style="left:45px;top:379px;width:1px;height:6px;background:#d6d6e2"></div>
<div style="left:212px;top:379px;width:1px;height:6px;background:#d6d6e2"></div>
<div style="left:45px;top:739px;width:1px;height:6px;background:#d6d6e2"></div>
<div style="left:212px;top:739px;width:1px;height:6px;background:#d6d6e2"></div>
<div style="left:15px;top:409px;width:6px;height:1px;background:#d6d6e2"></div>
<div style="left:237px;top:409px;width:6px;height:1px;background:#d6d6e2"></div>
<div style="left:15px;top:714px;width:6px;height:1px;background:#d6d6e2"></div>
<div style="left:237px;top:714px;width:6px;height:1px;background:#d6d6e2"></div>
<div style="left:44px;top:379px;width:1px;height:6px;background:#6a6a70"></div>
<div style="left:211px;top:379px;width:1px;height:6px;background:#6a6a70"></div>
<div style="left:44px;top:739px;width:1px;height:6px;background:#6a6a70"></div>
<div style="left:211px;top:739px;width:1px;height:6px;background:#6a6a70"></div>
<div style="left:15px;top:408px;width:6px;height:1px;background:#6a6a70"></div>
<div style="left:237px;top:408px;width:6px;height:1px;background:#6a6a70"></div>
<div style="left:15px;top:713px;width:6px;height:1px;background:#6a6a70"></div>
<div style="left:237px;top:713px;width:6px;height:1px;background:#6a6a70"></div>
<div style="left:21px;top:385px;width:216px;height:25px;border:1px solid #000;background:#a4a4a8"></div>
<div style="left:22px;top:386px;width:24px;height:23px;border-style:solid;border-width:1px;border-color:#d6d6e2 #6a6a70 #6a6a70 #d6d6e2;"></div>
<div style="left:46px;top:386px;width:141px;height:23px;border-style:solid;border-width:1px;border-color:#d6d6e2 #6a6a70 #6a6a70 #d6d6e2;"></div>
<div style="left:187px;top:386px;width:25px;height:23px;border-style:solid;border-width:1px;border-color:#d6d6e2 #6a6a70 #6a6a70 #d6d6e2;"></div>
<div style="left:212px;top:386px;width:24px;height:23px;border-style:solid;border-width:1px;border-color:#d6d6e2 #6a6a70 #6a6a70 #d6d6e2;"></div>
<div style="left:26px;top:394px;width:17px;height:6px;border:solid #000;border-width:1px 2px 2px 1px"></div>
<div style="left:197px;top:395px;width:5px;height:5px;border:solid #000;border-width:1px 2px 2px 1px;background:#c8c8d0"></div>
<div style="left:217px;top:389px;width:15px;height:17px;border:solid #000;border-width:1px 2px 2px 1px"></div>
<div class="t" style="left:59px;top:388px;font-size:14.5px;font-weight:normal;font-style:italic;color:#000;letter-spacing:0.468px;-webkit-text-stroke:0.45px #000">Select Color</div>
<div style="left:21px;top:410px;width:216px;height:329px;background:#dedee2"></div>
<div style="left:22px;top:410px;width:214px;height:328px;border-style:solid;border-width:1px;border-color:#ffffff #9494a8 #9494a8 #ffffff;"></div>
<div style="left:236px;top:410px;width:1px;height:329px;background:#000"></div>
<div style="left:21px;top:738px;width:216px;height:1px;background:#000"></div>
<div style="left:25px;top:414px;width:141px;height:17px;background:#ff0000;border:2px solid;border-color:#b00000 #ff0000 #ff0000 #b00000"></div>
<div style="left:133px;top:416px;width:31px;height:13px;border-style:solid;border-width:1px;border-color:#ffffff #9494a8 #9494a8 #ffffff;background:#dedee2;"></div>
<div style="left:148px;top:417px;width:1px;height:11px;background:#9494a8"></div>
<div style="left:25px;top:453px;width:141px;height:17px;background:#00ff00"></div>
<div style="left:39px;top:455px;width:30px;height:13px;border-style:solid;border-width:1px;border-color:#ffffff #9494a8 #9494a8 #ffffff;background:#dedee2;"></div>
<div style="left:54px;top:456px;width:1px;height:11px;background:#9494a8"></div>
<div style="left:25px;top:492px;width:141px;height:17px;background:#0000ff"></div>
<div style="left:27px;top:494px;width:30px;height:13px;border-style:solid;border-width:1px;border-color:#ffffff #9494a8 #9494a8 #ffffff;background:#dedee2;"></div>
<div style="left:42px;top:495px;width:1px;height:11px;background:#9494a8"></div>
<div class="t" style="left:63px;top:435px;font-size:12px;font-weight:bold;font-style:normal;color:#000;letter-spacing:-0.391px;">Red</div>
<div style="left:89px;top:432px;width:42px;height:20px;border-style:solid;border-width:2px;border-color:#9494a8 #ffffff #ffffff #9494a8;background:#dedee2;"></div>
<div class="t" style="left:92px;top:435px;font-size:12px;font-weight:normal;font-style:normal;color:#000;">0.0</div>
<div class="t" style="left:57px;top:474px;font-size:12px;font-weight:bold;font-style:normal;color:#000;letter-spacing:-0.197px;">Green</div>
<div style="left:95px;top:471px;width:41px;height:20px;border-style:solid;border-width:2px;border-color:#9494a8 #ffffff #ffffff #9494a8;background:#dedee2;"></div>
<div class="t" style="left:98px;top:474px;font-size:12px;font-weight:normal;font-style:normal;color:#000;">0.0</div>
<div class="t" style="left:62px;top:512px;font-size:12px;font-weight:bold;font-style:normal;color:#000;letter-spacing:-0.479px;">Blue</div>
<div style="left:90px;top:510px;width:41px;height:20px;border-style:solid;border-width:2px;border-color:#9494a8 #ffffff #ffffff #9494a8;background:#dedee2;"></div>
<div style="left:177px;top:421px;width:48px;height:104px;background:#ff4400"></div>
<div style="left:22px;top:535px;width:214px;height:1px;background:#9494a8"></div>
<div style="left:22px;top:536px;width:214px;height:1px;background:#ffffff"></div>
<div style="left:45px;top:563px;width:16px;height:22px;background:#5a5a5a;border-style:solid;border-width:1px 2px 2px 1px;border-color:rgba(255,255,255,.5) rgba(0,0,0,.3) rgba(0,0,0,.3) rgba(255,255,255,.5)"></div>
<div style="left:64px;top:563px;width:16px;height:22px;background:#5aa05a;border-style:solid;border-width:1px 2px 2px 1px;border-color:rgba(255,255,255,.5) rgba(0,0,0,.3) rgba(0,0,0,.3) rgba(255,255,255,.5)"></div>
<div style="left:83px;top:563px;width:16px;height:22px;background:#64e65a;border-style:solid;border-width:1px 2px 2px 1px;border-color:rgba(255,255,255,.5) rgba(0,0,0,.3) rgba(0,0,0,.3) rgba(255,255,255,.5)"></div>
<div style="left:102px;top:563px;width:16px;height:22px;background:#b4645a;border-style:solid;border-width:1px 2px 2px 1px;border-color:rgba(255,255,255,.5) rgba(0,0,0,.3) rgba(0,0,0,.3) rgba(255,255,255,.5)"></div>
<div style="left:121px;top:563px;width:16px;height:22px;background:#aaa05a;border-style:solid;border-width:1px 2px 2px 1px;border-color:rgba(255,255,255,.5) rgba(0,0,0,.3) rgba(0,0,0,.3) rgba(255,255,255,.5)"></div>
<div style="left:140px;top:563px;width:16px;height:22px;background:#bee65a;border-style:solid;border-width:1px 2px 2px 1px;border-color:rgba(255,255,255,.5) rgba(0,0,0,.3) rgba(0,0,0,.3) rgba(255,255,255,.5)"></div>
<div style="left:159px;top:563px;width:16px;height:22px;background:#f05a5a;border-style:solid;border-width:1px 2px 2px 1px;border-color:rgba(255,255,255,.5) rgba(0,0,0,.3) rgba(0,0,0,.3) rgba(255,255,255,.5)"></div>
<div style="left:178px;top:563px;width:16px;height:22px;background:#f0aa5a;border-style:solid;border-width:1px 2px 2px 1px;border-color:rgba(255,255,255,.5) rgba(0,0,0,.3) rgba(0,0,0,.3) rgba(255,255,255,.5)"></div>
<div style="left:197px;top:563px;width:16px;height:22px;background:#ffffff;border-style:solid;border-width:1px 2px 2px 1px;border-color:rgba(255,255,255,.5) rgba(0,0,0,.3) rgba(0,0,0,.3) rgba(255,255,255,.5)"></div>
<div style="left:45px;top:589px;width:16px;height:22px;background:#6464b4;border-style:solid;border-width:1px 2px 2px 1px;border-color:rgba(255,255,255,.5) rgba(0,0,0,.3) rgba(0,0,0,.3) rgba(255,255,255,.5)"></div>
<div style="left:64px;top:589px;width:16px;height:22px;background:#5aa0a0;border-style:solid;border-width:1px 2px 2px 1px;border-color:rgba(255,255,255,.5) rgba(0,0,0,.3) rgba(0,0,0,.3) rgba(255,255,255,.5)"></div>
<div style="left:83px;top:589px;width:16px;height:22px;background:#64e6a0;border-style:solid;border-width:1px 2px 2px 1px;border-color:rgba(255,255,255,.5) rgba(0,0,0,.3) rgba(0,0,0,.3) rgba(255,255,255,.5)"></div>
<div style="left:102px;top:589px;width:16px;height:22px;background:#aa64b4;border-style:solid;border-width:1px 2px 2px 1px;border-color:rgba(255,255,255,.5) rgba(0,0,0,.3) rgba(0,0,0,.3) rgba(255,255,255,.5)"></div>
<div style="left:121px;top:589px;width:16px;height:22px;background:#aaaaaa;border-style:solid;border-width:1px 2px 2px 1px;border-color:rgba(255,255,255,.5) rgba(0,0,0,.3) rgba(0,0,0,.3) rgba(255,255,255,.5)"></div>
<div style="left:140px;top:589px;width:16px;height:22px;background:#b4e6a0;border-style:solid;border-width:1px 2px 2px 1px;border-color:rgba(255,255,255,.5) rgba(0,0,0,.3) rgba(0,0,0,.3) rgba(255,255,255,.5)"></div>
<div style="left:159px;top:589px;width:16px;height:22px;background:#f05ab4;border-style:solid;border-width:1px 2px 2px 1px;border-color:rgba(255,255,255,.5) rgba(0,0,0,.3) rgba(0,0,0,.3) rgba(255,255,255,.5)"></div>
<div style="left:178px;top:589px;width:16px;height:22px;background:#f0aab4;border-style:solid;border-width:1px 2px 2px 1px;border-color:rgba(255,255,255,.5) rgba(0,0,0,.3) rgba(0,0,0,.3) rgba(255,255,255,.5)"></div>
<div style="left:197px;top:589px;width:16px;height:22px;background:#d2d2d2;border-style:solid;border-width:1px 2px 2px 1px;border-color:rgba(255,255,255,.5) rgba(0,0,0,.3) rgba(0,0,0,.3) rgba(255,255,255,.5)"></div>
<div style="left:45px;top:615px;width:16px;height:22px;background:#645af0;border-style:solid;border-width:1px 2px 2px 1px;border-color:rgba(255,255,255,.5) rgba(0,0,0,.3) rgba(0,0,0,.3) rgba(255,255,255,.5)"></div>
<div style="left:64px;top:615px;width:16px;height:22px;background:#5aa0f0;border-style:solid;border-width:1px 2px 2px 1px;border-color:rgba(255,255,255,.5) rgba(0,0,0,.3) rgba(0,0,0,.3) rgba(255,255,255,.5)"></div>
<div style="left:83px;top:615px;width:16px;height:22px;background:#64e6f0;border-style:solid;border-width:1px 2px 2px 1px;border-color:rgba(255,255,255,.5) rgba(0,0,0,.3) rgba(0,0,0,.3) rgba(255,255,255,.5)"></div>
<div style="left:102px;top:615px;width:16px;height:22px;background:#aa5af0;border-style:solid;border-width:1px 2px 2px 1px;border-color:rgba(255,255,255,.5) rgba(0,0,0,.3) rgba(0,0,0,.3) rgba(255,255,255,.5)"></div>
<div style="left:121px;top:615px;width:16px;height:22px;background:#b4b4f0;border-style:solid;border-width:1px 2px 2px 1px;border-color:rgba(255,255,255,.5) rgba(0,0,0,.3) rgba(0,0,0,.3) rgba(255,255,255,.5)"></div>
<div style="left:140px;top:615px;width:16px;height:22px;background:#b4f0f0;border-style:solid;border-width:1px 2px 2px 1px;border-color:rgba(255,255,255,.5) rgba(0,0,0,.3) rgba(0,0,0,.3) rgba(255,255,255,.5)"></div>
<div style="left:159px;top:615px;width:16px;height:22px;background:#f05af0;border-style:solid;border-width:1px 2px 2px 1px;border-color:rgba(255,255,255,.5) rgba(0,0,0,.3) rgba(0,0,0,.3) rgba(255,255,255,.5)"></div>
<div style="left:178px;top:615px;width:16px;height:22px;background:#faaaf0;border-style:solid;border-width:1px 2px 2px 1px;border-color:rgba(255,255,255,.5) rgba(0,0,0,.3) rgba(0,0,0,.3) rgba(255,255,255,.5)"></div>
<div style="left:197px;top:615px;width:16px;height:22px;background:#a0a0a0;border-style:solid;border-width:1px 2px 2px 1px;border-color:rgba(255,255,255,.5) rgba(0,0,0,.3) rgba(0,0,0,.3) rgba(255,255,255,.5)"></div>
<div style="left:45px;top:641px;width:16px;height:22px;background:#ff0000;border-style:solid;border-width:1px 2px 2px 1px;border-color:rgba(255,255,255,.5) rgba(0,0,0,.3) rgba(0,0,0,.3) rgba(255,255,255,.5)"></div>
<div style="left:64px;top:641px;width:16px;height:22px;background:#ff5a00;border-style:solid;border-width:1px 2px 2px 1px;border-color:rgba(255,255,255,.5) rgba(0,0,0,.3) rgba(0,0,0,.3) rgba(255,255,255,.5)"></div>
<div style="left:83px;top:641px;width:16px;height:22px;background:#ff9600;border-style:solid;border-width:1px 2px 2px 1px;border-color:rgba(255,255,255,.5) rgba(0,0,0,.3) rgba(0,0,0,.3) rgba(255,255,255,.5)"></div>
<div style="left:102px;top:641px;width:16px;height:22px;background:#ffbe00;border-style:solid;border-width:1px 2px 2px 1px;border-color:rgba(255,255,255,.5) rgba(0,0,0,.3) rgba(0,0,0,.3) rgba(255,255,255,.5)"></div>
<div style="left:121px;top:641px;width:16px;height:22px;background:#e6d200;border-style:solid;border-width:1px 2px 2px 1px;border-color:rgba(255,255,255,.5) rgba(0,0,0,.3) rgba(0,0,0,.3) rgba(255,255,255,.5)"></div>
<div style="left:140px;top:641px;width:16px;height:22px;background:#fff000;border-style:solid;border-width:1px 2px 2px 1px;border-color:rgba(255,255,255,.5) rgba(0,0,0,.3) rgba(0,0,0,.3) rgba(255,255,255,.5)"></div>
<div style="left:159px;top:641px;width:16px;height:22px;background:#fff064;border-style:solid;border-width:1px 2px 2px 1px;border-color:rgba(255,255,255,.5) rgba(0,0,0,.3) rgba(0,0,0,.3) rgba(255,255,255,.5)"></div>
<div style="left:178px;top:641px;width:16px;height:22px;background:#fffaaa;border-style:solid;border-width:1px 2px 2px 1px;border-color:rgba(255,255,255,.5) rgba(0,0,0,.3) rgba(0,0,0,.3) rgba(255,255,255,.5)"></div>
<div style="left:197px;top:641px;width:16px;height:22px;background:#646464;border-style:solid;border-width:1px 2px 2px 1px;border-color:rgba(255,255,255,.5) rgba(0,0,0,.3) rgba(0,0,0,.3) rgba(255,255,255,.5)"></div>
<div style="left:45px;top:667px;width:16px;height:22px;background:#00ffff;border-style:solid;border-width:1px 2px 2px 1px;border-color:rgba(255,255,255,.5) rgba(0,0,0,.3) rgba(0,0,0,.3) rgba(255,255,255,.5)"></div>
<div style="left:64px;top:667px;width:16px;height:22px;background:#00c8ff;border-style:solid;border-width:1px 2px 2px 1px;border-color:rgba(255,255,255,.5) rgba(0,0,0,.3) rgba(0,0,0,.3) rgba(255,255,255,.5)"></div>
<div style="left:83px;top:667px;width:16px;height:22px;background:#0096ff;border-style:solid;border-width:1px 2px 2px 1px;border-color:rgba(255,255,255,.5) rgba(0,0,0,.3) rgba(0,0,0,.3) rgba(255,255,255,.5)"></div>
<div style="left:102px;top:667px;width:16px;height:22px;background:#0064f0;border-style:solid;border-width:1px 2px 2px 1px;border-color:rgba(255,255,255,.5) rgba(0,0,0,.3) rgba(0,0,0,.3) rgba(255,255,255,.5)"></div>
<div style="left:121px;top:667px;width:16px;height:22px;background:#0000ff;border-style:solid;border-width:1px 2px 2px 1px;border-color:rgba(255,255,255,.5) rgba(0,0,0,.3) rgba(0,0,0,.3) rgba(255,255,255,.5)"></div>
<div style="left:140px;top:667px;width:16px;height:22px;background:#0000d2;border-style:solid;border-width:1px 2px 2px 1px;border-color:rgba(255,255,255,.5) rgba(0,0,0,.3) rgba(0,0,0,.3) rgba(255,255,255,.5)"></div>
<div style="left:159px;top:667px;width:16px;height:22px;background:#0000aa;border-style:solid;border-width:1px 2px 2px 1px;border-color:rgba(255,255,255,.5) rgba(0,0,0,.3) rgba(0,0,0,.3) rgba(255,255,255,.5)"></div>
<div style="left:178px;top:667px;width:16px;height:22px;background:#000064;border-style:solid;border-width:1px 2px 2px 1px;border-color:rgba(255,255,255,.5) rgba(0,0,0,.3) rgba(0,0,0,.3) rgba(255,255,255,.5)"></div>
<div style="left:197px;top:667px;width:16px;height:22px;background:#000000;border-style:solid;border-width:1px 2px 2px 1px;border-color:rgba(255,255,255,.5) rgba(0,0,0,.3) rgba(0,0,0,.3) rgba(255,255,255,.5)"></div>
<div class="t" style="left:46px;top:719px;font-size:12px;font-weight:bold;font-style:normal;color:#000;letter-spacing:-0.616px;">Wire Color</div>
<div style="left:135px;top:715px;width:25px;height:22px;border-style:solid;border-width:2px;border-color:#ffffff #9494a8 #9494a8 #ffffff;background:#dedee2;"></div>
<div class="t" style="left:137px;top:718px;font-size:12px;font-weight:normal;font-style:normal;color:#000;letter-spacing:0.228px;">OK</div>
<div style="left:180px;top:716px;width:45px;height:21px;border-style:solid;border-width:2px;border-color:#ffffff #9494a8 #9494a8 #ffffff;background:#dedee2;"></div>
<div class="t" style="left:181px;top:718px;font-size:12px;font-weight:normal;font-style:normal;color:#000;letter-spacing:0.373px;">Cancel</div>
<div style="left:487px;top:530px;width:200px;height:226px;background:#a4a4a8"></div>
<div style="left:487px;top:530px;width:200px;height:226px;border-style:solid;border-width:1px;border-color:#d6d6e2 #6a6a70 #6a6a70 #d6d6e2;"></div>
<div style="left:492px;top:535px;width:190px;height:216px;border-style:solid;border-width:1px;border-color:#6a6a70 #d6d6e2 #d6d6e2 #6a6a70;"></div>
<div style="left:517px;top:530px;width:1px;height:6px;background:#d6d6e2"></div>
<div style="left:656px;top:530px;width:1px;height:6px;background:#d6d6e2"></div>
<div style="left:517px;top:750px;width:1px;height:6px;background:#d6d6e2"></div>
<div style="left:656px;top:750px;width:1px;height:6px;background:#d6d6e2"></div>
<div style="left:487px;top:560px;width:6px;height:1px;background:#d6d6e2"></div>
<div style="left:681px;top:560px;width:6px;height:1px;background:#d6d6e2"></div>
<div style="left:487px;top:725px;width:6px;height:1px;background:#d6d6e2"></div>
<div style="left:681px;top:725px;width:6px;height:1px;background:#d6d6e2"></div>
<div style="left:516px;top:530px;width:1px;height:6px;background:#6a6a70"></div>
<div style="left:655px;top:530px;width:1px;height:6px;background:#6a6a70"></div>
<div style="left:516px;top:750px;width:1px;height:6px;background:#6a6a70"></div>
<div style="left:655px;top:750px;width:1px;height:6px;background:#6a6a70"></div>
<div style="left:487px;top:559px;width:6px;height:1px;background:#6a6a70"></div>
<div style="left:681px;top:559px;width:6px;height:1px;background:#6a6a70"></div>
<div style="left:487px;top:724px;width:6px;height:1px;background:#6a6a70"></div>
<div style="left:681px;top:724px;width:6px;height:1px;background:#6a6a70"></div>
<div style="left:493px;top:536px;width:188px;height:25px;border:1px solid #000;background:#a4a4a8"></div>
<div style="left:494px;top:537px;width:24px;height:23px;border-style:solid;border-width:1px;border-color:#d6d6e2 #6a6a70 #6a6a70 #d6d6e2;"></div>
<div style="left:518px;top:537px;width:113px;height:23px;border-style:solid;border-width:1px;border-color:#d6d6e2 #6a6a70 #6a6a70 #d6d6e2;"></div>
<div style="left:631px;top:537px;width:25px;height:23px;border-style:solid;border-width:1px;border-color:#d6d6e2 #6a6a70 #6a6a70 #d6d6e2;"></div>
<div style="left:656px;top:537px;width:24px;height:23px;border-style:solid;border-width:1px;border-color:#d6d6e2 #6a6a70 #6a6a70 #d6d6e2;"></div>
<div style="left:498px;top:545px;width:17px;height:6px;border:solid #000;border-width:1px 2px 2px 1px"></div>
<div style="left:641px;top:546px;width:5px;height:5px;border:solid #000;border-width:1px 2px 2px 1px;background:#c8c8d0"></div>
<div style="left:661px;top:540px;width:15px;height:17px;border:solid #000;border-width:1px 2px 2px 1px"></div>
<div class="t" style="left:521px;top:538px;font-size:14.5px;font-weight:normal;font-style:italic;color:#000;letter-spacing:0.478px;-webkit-text-stroke:0.45px #000">Position Surfac</div>
<div style="left:493px;top:561px;width:188px;height:190px;background:#dedee2"></div>
<div style="left:494px;top:561px;width:186px;height:189px;border-style:solid;border-width:1px;border-color:#ffffff #9494a8 #9494a8 #ffffff;"></div>
<div style="left:680px;top:561px;width:1px;height:190px;background:#000"></div>
<div style="left:493px;top:750px;width:188px;height:1px;background:#000"></div>
<div style="left:500px;top:564px;width:20px;height:100px;border-style:solid;border-width:2px;border-color:#9494a8 #ffffff #ffffff #9494a8;background:#dedee2;"></div>
<div style="left:502px;top:600px;width:15px;height:28px;border-style:solid;border-width:1px;border-color:#ffffff #9494a8 #9494a8 #ffffff;background:#dedee2;"></div>
<div style="left:503px;top:614px;width:13px;height:1px;background:#9494a8"></div>
<div style="left:538px;top:564px;width:127px;height:125px;border-style:solid;border-width:3px;border-color:#9494a8 #ffffff #ffffff #9494a8;background:#dedee2;"></div>
<div style="left:602px;top:567px;width:1px;height:119px;background:#000"></div>
<div style="left:541px;top:627px;width:121px;height:1px;background:#000"></div>
<div class="t" style="left:500px;top:700px;font-size:12px;font-weight:bold;font-style:normal;color:#000;">Z:</div>
<div style="left:514px;top:697px;width:43px;height:20px;border-style:solid;border-width:2px;border-color:#9494a8 #ffffff #ffffff #9494a8;background:#dedee2;"></div>
<div class="t" style="left:517px;top:700px;font-size:12px;font-weight:normal;font-style:normal;color:#000;width:38px;overflow:hidden;letter-spacing:0.4px">-90.90</div>
<div class="t" style="left:560px;top:700px;font-size:12px;font-weight:bold;font-style:normal;color:#000;">X:</div>
<div style="left:574px;top:697px;width:43px;height:20px;border-style:solid;border-width:2px;border-color:#9494a8 #ffffff #ffffff #9494a8;background:#dedee2;"></div>
<div class="t" style="left:578px;top:700px;font-size:12px;font-weight:normal;font-style:normal;color:#000;">0.0</div>
<div class="t" style="left:619px;top:700px;font-size:12px;font-weight:bold;font-style:normal;color:#000;">Y:</div>
<div style="left:635px;top:697px;width:42px;height:20px;border-style:solid;border-width:2px;border-color:#9494a8 #ffffff #ffffff #9494a8;background:#dedee2;"></div>
<div class="t" style="left:638px;top:700px;font-size:12px;font-weight:normal;font-style:normal;color:#000;">0.0</div>
<div style="left:500px;top:722px;width:84px;height:21px;border-style:solid;border-width:2px;border-color:#ffffff #9494a8 #9494a8 #ffffff;background:#dedee2;"></div>
<div class="t" style="left:523px;top:724px;font-size:12px;font-weight:normal;font-style:normal;color:#000;letter-spacing:-0.132px;">Reset</div>
<div style="left:589px;top:722px;width:85px;height:21px;border-style:solid;border-width:2px;border-color:#ffffff #9494a8 #9494a8 #ffffff;background:#dedee2;"></div>
<div class="t" style="left:614px;top:724px;font-size:12px;font-weight:normal;font-style:normal;color:#000;letter-spacing:0.002px;">Close</div>
</body></html>
